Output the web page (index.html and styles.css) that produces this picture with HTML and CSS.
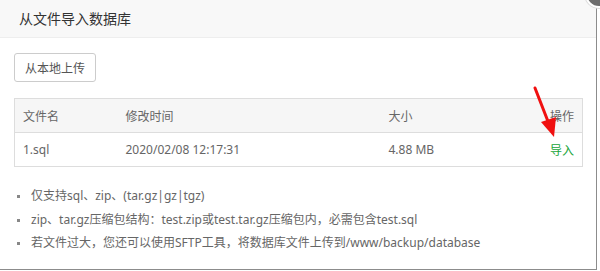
FILE: index.html
```html
<!DOCTYPE html>
<html lang="zh-CN">
<head>
<meta charset="utf-8">
<title>从文件导入数据库</title>
<link rel="stylesheet" href="styles.css">
</head>
<body>
<div class="dialog">
  <div class="dlg-title">从文件导入数据库</div>
  <div class="dlg-body">
    <button class="btn">从本地上传</button>
    <table class="files">
      <colgroup>
        <col class="c1"><col class="c2"><col class="c3"><col class="c4">
      </colgroup>
      <thead>
        <tr><th>文件名</th><th>修改时间</th><th>大小</th><th class="right">操作</th></tr>
      </thead>
      <tbody>
        <tr><td>1.sql</td><td>2020/02/08 12:17:31</td><td>4.88 MB</td><td class="right"><a class="btlink">导入</a></td></tr>
      </tbody>
    </table>
    <ul class="help">
      <li>仅支持sql、zip、(tar.gz|gz|tgz)</li>
      <li>zip、tar.gz压缩包结构：test.zip或test.tar.gz压缩包内，必需包含test.sql</li>
      <li>若文件过大，您还可以使用SFTP工具，将数据库文件上传到/www/backup/database</li>
    </ul>
  </div>
  <span class="close"></span>
  <svg class="arrow" width="40" height="60" viewBox="0 0 40 60">
    <line x1="3" y1="2" x2="17" y2="38" stroke="#f01010" stroke-width="3" stroke-linecap="round"/>
    <polygon points="9,36 24,31 22,51" fill="#f01010"/>
  </svg>
</div>
</body>
</html>
```
FILE: styles.css
```css
html, body {
  margin: 0;
  padding: 0;
  background: #fff;
  overflow: hidden;
}
body {
  width: 600px;
  height: 271px;
  font-family: "Noto Sans", "Noto Sans CJK SC", sans-serif;
  font-size: 12px;
  color: #666;
}
.dialog {
  position: relative;
  width: 596px;
  height: 269px;
  border-right: 1px solid #8c8c8c;
  border-bottom: 1px solid #8c8c8c;
  background: #fff;
}
.dlg-title {
  height: 38px;
  line-height: 38px;
  box-sizing: border-box;
  padding-left: 19px;
  background: #f8f8f8;
  border-bottom: 1px solid #eee;
  color: #333;
  font-size: 14px;
}
.dlg-body {
  padding: 15px 13px 0 14px;
}
.btn {
  display: block;
  height: 29px;
  width: 82px;
  padding: 0;
  border: 1px solid #ccc;
  border-radius: 3px;
  background: #fff;
  color: #555;
  font-family: inherit;
  font-size: 12px;
}
.files {
  margin-top: 16px;
  width: 569px;
  border-collapse: collapse;
  table-layout: fixed;
  border: 1px solid #ddd;
}
.c1 { width: 103px; }
.c2 { width: 263px; }
.c4 { width: 80px; }
.files th, .files td {
  height: 33px;
  padding: 0 8px;
  text-align: left;
  font-weight: normal;
  color: #666;
  white-space: nowrap;
}
.files thead tr {
  background: #f6f6f6;
  border-bottom: 1px solid #ddd;
}
.files .right { text-align: right; }
.btlink { color: #20a53a; }
.help {
  margin: 17px 0 0 0;
  padding: 0 0 0 17px;
  list-style: none;
}
.help li {
  position: relative;
  line-height: 23.5px;
  padding-left: 0;
  color: #666;
}
.help li::before {
  content: "";
  position: absolute;
  left: -14px;
  top: 11px;
  width: 3px;
  height: 3px;
  background: #888;
}
.close {
  position: absolute;
  left: 585px;
  top: -20px;
  width: 24px;
  height: 24px;
  border-radius: 50%;
  background: #6e6e6e;
  border: 2px solid #fff;
  box-shadow: 0 0 0 1px #ddd;
}
.arrow {
  position: absolute;
  left: 532px;
  top: 86px;
}
```
